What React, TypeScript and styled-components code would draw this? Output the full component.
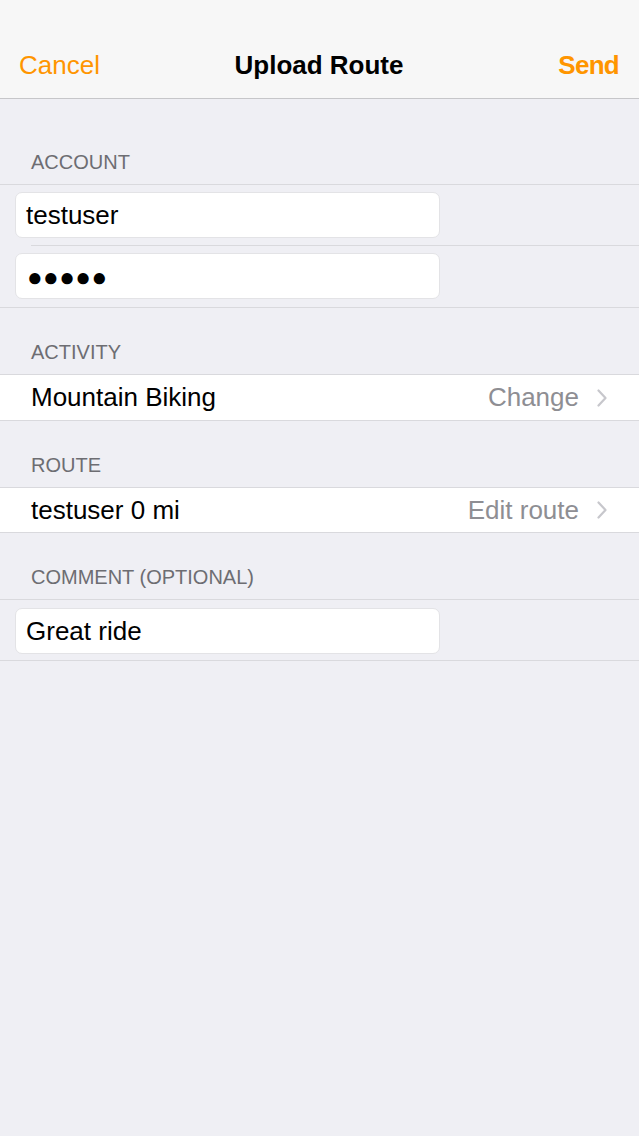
import React from "react";
import styled, { createGlobalStyle } from "styled-components";

const GlobalStyle = createGlobalStyle`
  html, body { margin: 0; padding: 0; }
  body {
    background: #efeff4;
    font-family: "Liberation Sans", Arial, Helvetica, sans-serif;
    -webkit-font-smoothing: antialiased;
  }
`;

const Page = styled.div`
  width: 639px;
  min-height: 1136px;
  background: #efeff4;
  display: flex;
  flex-direction: column;
`;

const NavBar = styled.header`
  height: 99px;
  box-sizing: border-box;
  padding: 32px 20px 0 19px;
  background: #f7f7f7;
  border-bottom: 1px solid #c6c6c9;
  display: grid;
  grid-template-columns: 1fr auto 1fr;
  align-items: center;
`;

const NavButton = styled.span<{ $align: "left" | "right"; $bold?: boolean }>`
  color: #ff9500;
  font-size: 26px;
  font-weight: ${(p) => (p.$bold ? 700 : 400)};
  letter-spacing: ${(p) => (p.$bold ? "-0.7px" : "0")};
  justify-self: ${(p) => (p.$align === "left" ? "start" : "end")};
  height: 66px;
  display: flex;
  align-items: center;
`;

const Title = styled.h1`
  margin: 0;
  font-size: 26px;
  font-weight: 700;
  color: #000;
  height: 66px;
  display: flex;
  align-items: center;
`;

const Section = styled.section<{ $first?: boolean }>`
  margin-top: ${(p) => (p.$first ? "19px" : "0")};
  display: flex;
  flex-direction: column;
`;

const SectionHeader = styled.div`
  height: 66px;
  box-sizing: border-box;
  padding: 0 0 11px 31px;
  display: flex;
  align-items: flex-end;
  font-size: 20px;
  line-height: 22px;
  color: #6d6d72;
  text-transform: uppercase;
`;

const Group = styled.div<{ $white?: boolean }>`
  border-top: 1px solid #d9d9dd;
  border-bottom: 1px solid #d9d9dd;
  background: ${(p) => (p.$white ? "#ffffff" : "transparent")};
`;

const FieldCell = styled.div<{ $height?: number; $divider?: boolean; $top?: number }>`
  height: ${(p) => p.$height ?? 61}px;
  box-sizing: border-box;
  padding: ${(p) => p.$top ?? 7}px 0 0 15px;
  position: relative;
  ${(p) =>
    p.$divider
      ? `
    &::after {
      content: "";
      position: absolute;
      left: 31px;
      right: 0;
      bottom: 0;
      height: 1px;
      background: #d9d9dd;
    }
  `
      : ""}
`;

const TextField = styled.div`
  width: 425px;
  height: 46px;
  box-sizing: border-box;
  background: #ffffff;
  border: 1px solid #e3e3e6;
  border-radius: 7px;
  padding: 0 10px;
  display: flex;
  align-items: center;
  font-size: 26px;
  color: #000;
`;

const Dots = styled.span`
  font-family: "Liberation Sans", "DejaVu Sans", sans-serif;
  font-size: 26px;
  letter-spacing: 0.4px;
  padding-left: 1px;
  position: relative;
  top: 1px;
`;

const Row = styled.div<{ $height?: number }>`
  height: ${(p) => p.$height ?? 45}px;
  box-sizing: border-box;
  padding: 0 32px 0 31px;
  display: flex;
  align-items: center;
  font-size: 26px;
  color: #000;
`;

const RowLabel = styled.span`
  flex: 1;
`;

const RowDetail = styled.span`
  color: #8e8e93;
  margin-right: 18px;
`;

const Chevron = () => (
  <svg width="10" height="18" viewBox="0 0 10 18" fill="none">
    <path d="M1.5 1.5 L8.5 9 L1.5 16.5" stroke="#c7c7cc" strokeWidth="2.2" strokeLinecap="round" strokeLinejoin="round" />
  </svg>
);

export default function App() {
  return (
    <>
      <GlobalStyle />
      <Page>
        <NavBar>
          <NavButton $align="left">Cancel</NavButton>
          <Title>Upload Route</Title>
          <NavButton $align="right" $bold>Send</NavButton>
        </NavBar>

        <Section $first>
          <SectionHeader>Account</SectionHeader>
          <Group>
            <FieldCell $divider $height={61}>
              <TextField>testuser</TextField>
            </FieldCell>
            <FieldCell $height={61}>
              <TextField>
                <Dots>●●●●●</Dots>
              </TextField>
            </FieldCell>
          </Group>
        </Section>

        <Section>
          <SectionHeader>Activity</SectionHeader>
          <Group $white>
            <Row $height={45}>
              <RowLabel>Mountain Biking</RowLabel>
              <RowDetail>Change</RowDetail>
              <Chevron />
            </Row>
          </Group>
        </Section>

        <Section>
          <SectionHeader>Route</SectionHeader>
          <Group $white>
            <Row $height={44}>
              <RowLabel>testuser 0 mi</RowLabel>
              <RowDetail>Edit route</RowDetail>
              <Chevron />
            </Row>
          </Group>
        </Section>

        <Section>
          <SectionHeader>Comment (optional)</SectionHeader>
          <Group>
            <FieldCell $height={60} $top={8}>
              <TextField>Great ride</TextField>
            </FieldCell>
          </Group>
        </Section>
      </Page>
    </>
  );
}
